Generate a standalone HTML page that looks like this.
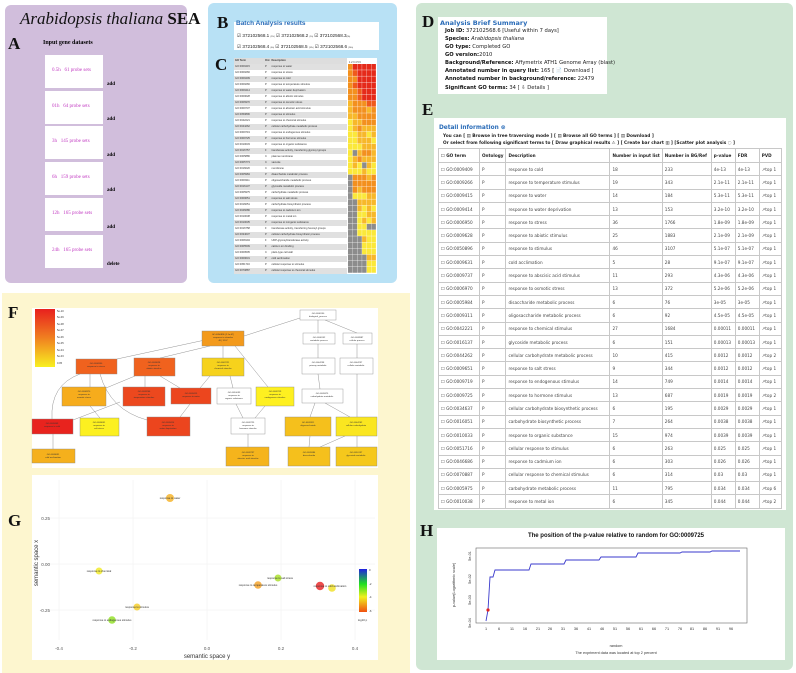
<!DOCTYPE html>
<html><head><meta charset="utf-8">
<style>
*{margin:0;padding:0;box-sizing:border-box}
body{width:796px;height:673px;background:#fff;position:relative;overflow:hidden;font-family:"Liberation Sans",sans-serif}
.abs{position:absolute}
.L{position:absolute;font-family:"Liberation Serif",serif;font-weight:bold;font-size:17px;color:#111}
.pa{background:#d1bedc;border-radius:6px}
.wb{position:absolute;left:45px;width:58px;height:33px;background:#fff;color:#c23cc2;font-family:"Liberation Serif",serif;font-size:5px;padding:13px 0 0 7px}
.add{position:absolute;left:107px;font-family:"Liberation Serif",serif;font-size:5px;font-weight:bold}
table{border-collapse:collapse}
#tc{position:absolute;left:234px;top:58px;width:113px;font-size:2.6px;color:#333}
#tc td{height:6px;line-height:6px;padding:0 1px;white-space:nowrap;overflow:hidden}
#tc tr:nth-child(even){background:#e0e0e0}
#te{position:absolute;left:438px;top:148px;width:344px;font-size:4.2px;color:#444;font-family:"DejaVu Sans",sans-serif;background:#fff}
#te td,#te th{border:1px solid #c8c8c8;height:13.3px;padding:0 2px;text-align:left;white-space:nowrap}
#te th{font-weight:bold;color:#222;height:14px}
.d{font-size:5.2px;color:#222;font-family:"DejaVu Sans",sans-serif;position:absolute;left:445px;white-space:nowrap}
.d b{color:#111}
</style></head><body>

<!-- A panel -->
<div class="abs pa" style="left:5px;top:5px;width:182px;height:278px"></div>
<div class="abs" style="left:20px;top:9px;font-family:'Liberation Serif',serif;font-size:17px;color:#111"><i>Arabidopsis thaliana</i> <b>SEA</b></div>
<div class="L" style="left:8px;top:34px">A</div>
<div class="abs" style="left:43px;top:40px;font-family:'Liberation Serif',serif;font-weight:bold;font-size:6px">Input gene datasets</div>
<div class="wb" style="top:55px">0.5h &nbsp; 61 probe sets</div><div class="add" style="top:82px">add</div>
<div class="wb" style="top:91px">01h &nbsp; 64 probe sets</div><div class="add" style="top:117px">add</div>
<div class="wb" style="top:126px">3h &nbsp; 145 probe sets</div><div class="add" style="top:153px">add</div>
<div class="wb" style="top:162px">6h &nbsp; 159 probe sets</div><div class="add" style="top:188px">add</div>
<div class="wb" style="top:198px">12h &nbsp; 165 probe sets</div><div class="add" style="top:225px">add</div>
<div class="wb" style="top:235px">24h &nbsp; 165 probe sets</div><div class="add" style="top:262px">delete</div>

<!-- B/C panel -->
<div class="abs" style="left:208px;top:3px;width:189px;height:280px;background:#b8e1f5;border-radius:6px"></div>
<div class="L" style="left:217px;top:13px">B</div>
<div class="L" style="left:215px;top:55px">C</div>
<div class="abs" style="left:234px;top:22px;width:145px;height:28px;background:#fff"></div>
<div class="abs" style="left:236px;top:20px;font-size:6.5px;font-weight:bold;color:#2a6cb8">Batch Analysis results</div>
<div class="abs" style="left:237px;top:31px;font-size:4.6px;color:#222;line-height:10px;white-space:nowrap">☑ 372102568.1 <span style="font-size:2px">(5%)</span> ☑ 372102568.2 <span style="font-size:2px">(1h)</span> ☑ 372102568.3<span style="font-size:2px">(3h)</span><br>☑ 372102568.4 <span style="font-size:2px">(6h)</span> ☑ 372102568.5 <span style="font-size:2px">(12h)</span> ☑ 372102568.6 <span style="font-size:2px">(24h)</span></div>
<div class="abs" style="left:234px;top:58px;width:143px;height:216px;background:#fff"></div>
<table id="tc">
<tr style="background:#ddd;font-weight:bold"><td style="width:30px">GO Term</td><td style="width:6px">Ont</td><td>Description</td></tr>
<tr><td>GO:0009415</td><td>P</td><td>response to water</td></tr>
<tr><td>GO:0009266</td><td>P</td><td>response to stress</td></tr>
<tr><td>GO:0009409</td><td>P</td><td>response to cold</td></tr>
<tr><td>GO:0009266</td><td>P</td><td>response to temperature stimulus</td></tr>
<tr><td>GO:0009414</td><td>P</td><td>response to water deprivation</td></tr>
<tr><td>GO:0009628</td><td>P</td><td>response to abiotic stimulus</td></tr>
<tr><td>GO:0006970</td><td>P</td><td>response to osmotic stress</td></tr>
<tr><td>GO:0009737</td><td>P</td><td>response to abscisic acid stimulus</td></tr>
<tr><td>GO:0050896</td><td>P</td><td>response to stimulus</td></tr>
<tr><td>GO:0042221</td><td>P</td><td>response to chemical stimulus</td></tr>
<tr><td>GO:0044262</td><td>P</td><td>cellular carbohydrate metabolic process</td></tr>
<tr><td>GO:0009719</td><td>P</td><td>response to endogenous stimulus</td></tr>
<tr><td>GO:0009725</td><td>P</td><td>response to hormone stimulus</td></tr>
<tr><td>GO:0010033</td><td>P</td><td>response to organic substance</td></tr>
<tr><td>GO:0016757</td><td>F</td><td>transferase activity, transferring glycosyl groups</td></tr>
<tr><td>GO:0005886</td><td>C</td><td>plasma membrane</td></tr>
<tr><td>GO:0005773</td><td>C</td><td>vacuole</td></tr>
<tr><td>GO:0016020</td><td>C</td><td>membrane</td></tr>
<tr><td>GO:0005984</td><td>P</td><td>disaccharide metabolic process</td></tr>
<tr><td>GO:0009311</td><td>P</td><td>oligosaccharide metabolic process</td></tr>
<tr><td>GO:0016137</td><td>P</td><td>glycoside metabolic process</td></tr>
<tr><td>GO:0005975</td><td>P</td><td>carbohydrate metabolic process</td></tr>
<tr><td>GO:0009651</td><td>P</td><td>response to salt stress</td></tr>
<tr><td>GO:0016051</td><td>P</td><td>carbohydrate biosynthetic process</td></tr>
<tr><td>GO:0046686</td><td>P</td><td>response to cadmium ion</td></tr>
<tr><td>GO:0010038</td><td>P</td><td>response to metal ion</td></tr>
<tr><td>GO:0010035</td><td>P</td><td>response to inorganic substance</td></tr>
<tr><td>GO:0016758</td><td>F</td><td>transferase activity, transferring hexosyl groups</td></tr>
<tr><td>GO:0034637</td><td>P</td><td>cellular carbohydrate biosynthetic process</td></tr>
<tr><td>GO:0008194</td><td>F</td><td>UDP-glycosyltransferase activity</td></tr>
<tr><td>GO:0005509</td><td>F</td><td>calcium ion binding</td></tr>
<tr><td>GO:0009505</td><td>C</td><td>plant-type cell wall</td></tr>
<tr><td>GO:0009631</td><td>P</td><td>cold acclimation</td></tr>
<tr><td>GO:0051716</td><td>P</td><td>cellular response to stimulus</td></tr>
<tr><td>GO:0070887</td><td>P</td><td>cellular response to chemical stimulus</td></tr>
</table>
<svg class="abs" style="left:348px;top:58px" width="30" height="216" id="hm">
<g font-size="2.5" fill="#333"><text x="1" y="5">1 2 3 4 5 6</text></g>
</svg>

<!-- D/E/H green panel -->
<div class="abs" style="left:416px;top:3px;width:377px;height:667px;background:#cfe6d3;border-radius:6px"></div>
<div class="L" style="left:422px;top:12px">D</div>
<div class="L" style="left:422px;top:100px">E</div>
<div class="L" style="left:420px;top:521px">H</div>
<div class="abs" style="left:438px;top:17px;width:169px;height:77px;background:#fff"></div>
<div class="abs" style="left:440px;top:19px;font-size:6.5px;font-weight:bold;color:#2a6cb8;font-family:'DejaVu Sans',sans-serif">Analysis Brief Summary</div>
<div class="d" style="top:28px"><b>Job ID:</b> 372102568.6 [Useful within 7 days]</div>
<div class="d" style="top:36px"><b>Species:</b> <i>Arabidopsis thaliana</i></div>
<div class="d" style="top:44px"><b>GO type:</b> Completed GO</div>
<div class="d" style="top:52px"><b>GO version:</b>2010</div>
<div class="d" style="top:60px"><b>Background/Reference:</b> Affymetrix ATH1 Genome Array (blast)</div>
<div class="d" style="top:68px"><b>Annotated number in query list:</b> 165 [ 📄 Download ]</div>
<div class="d" style="top:76px"><b>Annotated number in background/reference:</b> 22479</div>
<div class="d" style="top:85px"><b>Significant GO terms:</b> 34 [ ⇩ Details ]</div>

<div class="abs" style="left:434px;top:118px;width:352px;height:392px;background:#fff"></div>
<div class="abs" style="left:439px;top:125px;font-size:5.8px;font-weight:bold;color:#2a6cb8;font-family:'DejaVu Sans',sans-serif">Detail information ⊗</div>
<div class="abs" style="left:443px;top:134px;font-size:4.3px;font-weight:bold;color:#222;font-family:'DejaVu Sans',sans-serif;white-space:nowrap">You can [ ▤ Browse in tree traversing mode ] [ ▤ Browse all GO terms ] [ ▤ Download ]</div>
<div class="abs" style="left:443px;top:141px;font-size:4.3px;font-weight:bold;color:#222;font-family:'DejaVu Sans',sans-serif;white-space:nowrap">Or select from following significant terms to [ Draw graphical results ⚠ ] [ Create bar chart ▥ ] [Scatter plot analysis ◌ ]</div>
<table id="te">
<tr><th style="width:41px">☐ GO term</th><th style="width:26px">Ontology</th><th style="width:104px">Description</th><th style="width:52px">Number in input list</th><th style="width:49px">Number in BG/Ref</th><th style="width:24px">p-value</th><th style="width:24px">FDR</th><th>PVD</th></tr>
<tr><td>☐ GO:0009409</td><td>P</td><td>response to cold</td><td>18</td><td>233</td><td>4e-13</td><td>4e-13</td><td>↗top 1</td></tr>
<tr><td>☐ GO:0009266</td><td>P</td><td>response to temperature stimulus</td><td>19</td><td>343</td><td>2.1e-11</td><td>2.1e-11</td><td>↗top 1</td></tr>
<tr><td>☐ GO:0009415</td><td>P</td><td>response to water</td><td>14</td><td>184</td><td>5.3e-11</td><td>5.3e-11</td><td>↗top 1</td></tr>
<tr><td>☐ GO:0009414</td><td>P</td><td>response to water deprivation</td><td>13</td><td>153</td><td>3.2e-10</td><td>3.2e-10</td><td>↗top 1</td></tr>
<tr><td>☐ GO:0006950</td><td>P</td><td>response to stress</td><td>36</td><td>1766</td><td>1.8e-09</td><td>1.8e-09</td><td>↗top 1</td></tr>
<tr><td>☐ GO:0009628</td><td>P</td><td>response to abiotic stimulus</td><td>25</td><td>1883</td><td>2.1e-09</td><td>2.1e-09</td><td>↗top 1</td></tr>
<tr><td>☐ GO:0050896</td><td>P</td><td>response to stimulus</td><td>46</td><td>3107</td><td>5.1e-07</td><td>5.1e-07</td><td>↗top 1</td></tr>
<tr><td>☐ GO:0009631</td><td>P</td><td>cold acclimation</td><td>5</td><td>28</td><td>9.1e-07</td><td>9.1e-07</td><td>↗top 1</td></tr>
<tr><td>☐ GO:0009737</td><td>P</td><td>response to abscisic acid stimulus</td><td>11</td><td>293</td><td>4.3e-06</td><td>4.3e-06</td><td>↗top 1</td></tr>
<tr><td>☐ GO:0006970</td><td>P</td><td>response to osmotic stress</td><td>13</td><td>372</td><td>5.2e-06</td><td>5.2e-06</td><td>↗top 1</td></tr>
<tr><td>☐ GO:0005984</td><td>P</td><td>disaccharide metabolic process</td><td>6</td><td>76</td><td>3e-05</td><td>3e-05</td><td>↗top 1</td></tr>
<tr><td>☐ GO:0009311</td><td>P</td><td>oligosaccharide metabolic process</td><td>6</td><td>92</td><td>4.5e-05</td><td>4.5e-05</td><td>↗top 1</td></tr>
<tr><td>☐ GO:0042221</td><td>P</td><td>response to chemical stimulus</td><td>27</td><td>1684</td><td>0.00011</td><td>0.00011</td><td>↗top 1</td></tr>
<tr><td>☐ GO:0016137</td><td>P</td><td>glycoside metabolic process</td><td>6</td><td>151</td><td>0.00013</td><td>0.00013</td><td>↗top 1</td></tr>
<tr><td>☐ GO:0044262</td><td>P</td><td>cellular carbohydrate metabolic process</td><td>10</td><td>415</td><td>0.0012</td><td>0.0012</td><td>↗top 2</td></tr>
<tr><td>☐ GO:0009651</td><td>P</td><td>response to salt stress</td><td>9</td><td>344</td><td>0.0012</td><td>0.0012</td><td>↗top 1</td></tr>
<tr><td>☐ GO:0009719</td><td>P</td><td>response to endogenous stimulus</td><td>14</td><td>749</td><td>0.0014</td><td>0.0014</td><td>↗top 1</td></tr>
<tr><td>☐ GO:0009725</td><td>P</td><td>response to hormone stimulus</td><td>13</td><td>687</td><td>0.0019</td><td>0.0019</td><td>↗top 2</td></tr>
<tr><td>☐ GO:0034637</td><td>P</td><td>cellular carbohydrate biosynthetic process</td><td>6</td><td>195</td><td>0.0029</td><td>0.0029</td><td>↗top 1</td></tr>
<tr><td>☐ GO:0016051</td><td>P</td><td>carbohydrate biosynthetic process</td><td>7</td><td>264</td><td>0.0038</td><td>0.0038</td><td>↗top 1</td></tr>
<tr><td>☐ GO:0010033</td><td>P</td><td>response to organic substance</td><td>15</td><td>974</td><td>0.0039</td><td>0.0039</td><td>↗top 1</td></tr>
<tr><td>☐ GO:0051716</td><td>P</td><td>cellular response to stimulus</td><td>6</td><td>263</td><td>0.025</td><td>0.025</td><td>↗top 1</td></tr>
<tr><td>☐ GO:0046686</td><td>P</td><td>response to cadmium ion</td><td>6</td><td>303</td><td>0.026</td><td>0.026</td><td>↗top 1</td></tr>
<tr><td>☐ GO:0070887</td><td>P</td><td>cellular response to chemical stimulus</td><td>6</td><td>314</td><td>0.03</td><td>0.03</td><td>↗top 1</td></tr>
<tr><td>☐ GO:0005975</td><td>P</td><td>carbohydrate metabolic process</td><td>11</td><td>795</td><td>0.034</td><td>0.034</td><td>↗top 6</td></tr>
<tr><td>☐ GO:0010038</td><td>P</td><td>response to metal ion</td><td>6</td><td>345</td><td>0.044</td><td>0.044</td><td>↗top 2</td></tr>
</table>

<!-- H chart -->
<svg class="abs" style="left:0;top:0" width="796" height="673" font-family="Liberation Sans, sans-serif">
<rect x="437" y="528" width="348" height="132" fill="#fff"/>
<text x="616" y="537" font-size="6" font-weight="bold" text-anchor="middle" fill="#111">The position of the p-value relative to random for GO:0009725</text>
<rect x="476" y="548" width="271" height="75" fill="none" stroke="#666" stroke-width="0.6"/>
<polyline fill="none" stroke="#3a3acc" stroke-width="0.9" points="486,621 488,610 490,577 493,577 495,570 529,570 531,564 564,564 566,560 599,560 601,557 636,557 638,553 680,553 682,552 710,552 712,551 740,551"/>
<circle cx="488" cy="610" r="1.6" fill="#e02020"/>
<g font-size="3.8" fill="#333" text-anchor="middle">
<text x="486" y="630">1</text><text x="499" y="630">6</text><text x="512" y="630">11</text><text x="525" y="630">16</text><text x="538" y="630">21</text><text x="550" y="630">26</text><text x="563" y="630">31</text><text x="576" y="630">36</text><text x="589" y="630">41</text><text x="602" y="630">46</text><text x="615" y="630">51</text><text x="628" y="630">56</text><text x="641" y="630">61</text><text x="654" y="630">66</text><text x="667" y="630">71</text><text x="680" y="630">76</text><text x="692" y="630">81</text><text x="705" y="630">86</text><text x="718" y="630">91</text><text x="731" y="630">96</text>
<text x="616" y="647">random</text><text x="616" y="654">The expriment data was located at top 2 percent</text>
</g>
<g font-size="3.8" fill="#333" text-anchor="middle">
<text transform="translate(471,556) rotate(-90)">5e-01</text><text transform="translate(471,579) rotate(-90)">5e-02</text><text transform="translate(471,600) rotate(-90)">5e-03</text><text transform="translate(471,623) rotate(-90)">5e-04</text>
<text transform="translate(455,585) rotate(-90)">p-value(Logarithmic scale)</text>
</g>
</svg>

<!-- F/G yellow panel -->
<div class="abs" style="left:2px;top:293px;width:408px;height:380px;background:#fdf6cf"></div>
<div class="L" style="left:8px;top:303px">F</div>
<div class="L" style="left:8px;top:511px">G</div>
<svg class="abs" style="left:0;top:0" width="796" height="673" font-family="Liberation Sans, sans-serif">
<rect x="32" y="308" width="346" height="160" fill="#fff"/>
<defs><linearGradient id="lg" x1="0" y1="0" x2="0" y2="1"><stop offset="0" stop-color="#e8201e"/><stop offset=".5" stop-color="#f08020"/><stop offset="1" stop-color="#f8f020"/></linearGradient></defs>
<rect x="35" y="309" width="20" height="58" fill="url(#lg)"/>
<g font-size="2.6" fill="#333"><text x="57" y="312">5e-10</text><text x="57" y="318">5e-09</text><text x="57" y="325">5e-08</text><text x="57" y="331">5e-07</text><text x="57" y="338">5e-06</text><text x="57" y="344">5e-05</text><text x="57" y="351">5e-04</text><text x="57" y="357">5e-03</text><text x="57" y="364">0.05</text></g>
<g stroke="#777" stroke-width="0.4" fill="none">
<path d="M300 318 L244 336"/><path d="M318 320 L318 333"/><path d="M325 320 L357 333"/>
<path d="M205 340 L117 359"/><path d="M210 346 L160 358"/><path d="M223 346 L223 358"/><path d="M235 346 L268 387"/>
<path d="M318 344 L318 358"/><path d="M357 344 L357 358"/><path d="M318 374 L320 389"/><path d="M357 374 L357 417"/>
<path d="M90 374 L90 387"/><path d="M100 374 Q110 410 147 420"/><path d="M80 374 Q50 385 52 419"/><path d="M145 376 L145 387"/><path d="M160 376 L180 388"/><path d="M135 376 L106 388"/>
<path d="M210 376 L200 388"/><path d="M230 376 L233 388"/><path d="M190 404 L180 417"/><path d="M120 402 L73 420"/><path d="M90 406 L100 418"/>
<path d="M235 402 L243 418"/><path d="M265 406 L255 418"/><path d="M248 434 L248 447"/><path d="M315 403 L310 417"/><path d="M325 403 L350 417"/>
<path d="M310 436 L309 447"/><path d="M345 436 L320 447"/><path d="M357 436 L357 447"/><path d="M53 434 L53 449"/>
</g>
<g stroke="#888" stroke-width="0.4" font-size="2.5" text-anchor="middle" fill="#333">
<rect x="300" y="310" width="36" height="10" fill="#fff"/>
<rect x="202" y="331" width="42" height="15" fill="#f39a1c"/>
<rect x="303" y="333" width="32" height="11" fill="#fff"/><rect x="343" y="333" width="29" height="11" fill="#fff"/>
<rect x="76" y="359" width="41" height="15" fill="#f0621e"/><rect x="134" y="358" width="41" height="18" fill="#f0621e"/><rect x="202" y="358" width="42" height="18" fill="#f6d21c"/>
<rect x="302" y="358" width="33" height="16" fill="#fff"/><rect x="340" y="358" width="33" height="16" fill="#fff"/>
<rect x="62" y="387" width="44" height="19" fill="#f6ac1c"/><rect x="123" y="387" width="42" height="19" fill="#ec481e"/><rect x="171" y="388" width="40" height="16" fill="#ec461e"/>
<rect x="217" y="388" width="34" height="16" fill="#fff"/><rect x="256" y="387" width="38" height="19" fill="#fef020"/><rect x="302" y="389" width="41" height="14" fill="#fff"/>
<rect x="32" y="419" width="41" height="15" fill="#e8231e"/><rect x="80" y="418" width="39" height="18" fill="#fcf020"/><rect x="147" y="417" width="43" height="19" fill="#ec451e"/>
<rect x="231" y="418" width="34" height="16" fill="#fff"/><rect x="285" y="417" width="46" height="19" fill="#f5c01c"/><rect x="336" y="417" width="41" height="19" fill="#fae620"/>
<rect x="32" y="449" width="43" height="14" fill="#f5b01c"/><rect x="226" y="447" width="43" height="19" fill="#f5b41c"/><rect x="288" y="447" width="42" height="19" fill="#f5c01c"/><rect x="336" y="447" width="41" height="19" fill="#f5c81c"/>
</g>
<g font-size="2.2" fill="#333" text-anchor="middle">
<text x="318" y="314">GO:0008150</text><text x="318" y="317">biological_process</text>
<text x="223" y="335">GO:0050896 (2.1e-07)</text><text x="223" y="338">response to stimulus</text><text x="223" y="341">46 | 3107</text>
<text x="319" y="338">GO:0008152</text><text x="319" y="341">metabolic process</text><text x="357" y="338">GO:0009987</text><text x="357" y="341">cellular process</text>
<text x="96" y="364">GO:0006950</text><text x="96" y="367">response to stress</text><text x="154" y="363">GO:0009628</text><text x="154" y="366">response to</text><text x="154" y="369">abiotic stimulus</text>
<text x="223" y="363">GO:0042221</text><text x="223" y="366">response to</text><text x="223" y="369">chemical stimulus</text>
<text x="318" y="363">GO:0044238</text><text x="318" y="366">primary metabolic</text><text x="356" y="363">GO:0044237</text><text x="356" y="366">cellular metabolic</text>
<text x="84" y="392">GO:0006970</text><text x="84" y="395">response to</text><text x="84" y="398">osmotic stress</text>
<text x="144" y="392">GO:0009266</text><text x="144" y="395">response to</text><text x="144" y="398">temperature stimulus</text>
<text x="191" y="394">GO:0009415</text><text x="191" y="397">response to water</text>
<text x="234" y="393">GO:0010033</text><text x="234" y="396">response to</text><text x="234" y="399">organic substance</text>
<text x="275" y="392">GO:0009719</text><text x="275" y="395">response to</text><text x="275" y="398">endogenous stimulus</text>
<text x="322" y="394">GO:0005975</text><text x="322" y="397">carbohydrate metabolic</text>
<text x="52" y="424">GO:0009409</text><text x="52" y="427">response to cold</text><text x="99" y="423">GO:0009651</text><text x="99" y="426">response to</text><text x="99" y="429">salt stress</text>
<text x="168" y="423">GO:0009414</text><text x="168" y="426">response to</text><text x="168" y="429">water deprivation</text>
<text x="248" y="423">GO:0009725</text><text x="248" y="426">response to</text><text x="248" y="429">hormone stimulus</text>
<text x="308" y="423">GO:0009311</text><text x="308" y="426">oligosaccharide</text><text x="356" y="423">GO:0044262</text><text x="356" y="426">cellular carbohydrate</text>
<text x="53" y="455">GO:0009631</text><text x="53" y="458">cold acclimation</text><text x="248" y="453">GO:0009737</text><text x="248" y="456">response to</text><text x="248" y="459">abscisic acid stimulus</text>
<text x="309" y="453">GO:0005984</text><text x="309" y="456">disaccharide</text><text x="356" y="453">GO:0016137</text><text x="356" y="456">glycoside metabolic</text>
</g>
<!-- G -->
<rect x="32" y="475" width="346" height="185" fill="#fff"/>
<g stroke="#eee" stroke-width="0.5"><path d="M59 480V640M133 480V640M207 480V640M281 480V640M355 480V640M50 518H375M50 564H375M50 610H375"/></g>
<g fill-opacity="0.8">
<circle cx="170" cy="498" r="4" fill="#f5b020"/><circle cx="99" cy="571" r="3.5" fill="#f0e820"/><circle cx="137" cy="607" r="3.5" fill="#f5cc20"/><circle cx="112" cy="620" r="3.8" fill="#90e020"/>
<circle cx="278" cy="578" r="3.5" fill="#a8e020"/><circle cx="258" cy="585" r="3.8" fill="#f5a020"/><circle cx="320" cy="586" r="4.2" fill="#e82020"/><circle cx="332" cy="588" r="3.8" fill="#f0e020"/>
</g>
<g font-size="2.6" fill="#333" text-anchor="middle">
<text x="170" y="499">response to water</text><text x="99" y="572">response to chemical</text><text x="137" y="608">response to stimulus</text><text x="112" y="621">response to endogenous stimulus</text>
<text x="280" y="579">response to salt stress</text><text x="258" y="586">response to temperature stimulus</text><text x="330" y="587">response to cold acclimation</text>
</g>
<g font-size="4.5" fill="#555" text-anchor="middle">
<text x="59" y="650">-0.4</text><text x="133" y="650">-0.2</text><text x="207" y="650">0.0</text><text x="281" y="650">0.2</text><text x="355" y="650">0.4</text>
<text x="50" y="520" text-anchor="end">0.25</text><text x="50" y="566" text-anchor="end">0.00</text><text x="50" y="612" text-anchor="end">-0.25</text>
<text x="207" y="658" font-size="6" fill="#333">semantic space y</text>
<text transform="translate(38,563) rotate(-90)" font-size="6" fill="#333">semantic space x</text>
</g>
<defs><linearGradient id="cb" x1="0" y1="0" x2="0" y2="1"><stop offset="0" stop-color="#2020e0"/><stop offset=".35" stop-color="#20e020"/><stop offset=".65" stop-color="#f0f020"/><stop offset="1" stop-color="#f05010"/></linearGradient></defs>
<rect x="359" y="569" width="8" height="43" fill="url(#cb)"/>
<g font-size="2.8" fill="#333"><text x="369" y="571">0</text><text x="369" y="585">-2</text><text x="369" y="598">-4</text><text x="369" y="612">-6</text><text x="358" y="621">log10 p</text></g>
</svg>

<script>
(function(){
var rows=["ORRRRR","OrRRRR","OORRRR","OrRRRR","OOrRRR","OOrRRR","oOOOrr","oOOOoO","ooOOOO","YooOOO","YoOooo","YYooYo","YYoooY","YYYooo","YGoOOo","YoOooo","YoYGoY","YYYoYY","GOOOoO","GOOOOO","GOoOOO","GYYYoo","GGoooo","GGoYoY","GGYYoo","GGYoYo","GGYYGG","GGYYYY","GGGoYY","GGGYYY","GGGYYY","GGGGoo","GGGGYY","GGGGYY"];
var c={R:"#e52a1a",r:"#ef5a1c",O:"#f3901e",o:"#f7b82a",Y:"#fbe83a",G:"#8c8c8c"};
var s=document.getElementById("hm"),h="";
for(var i=0;i<rows.length;i++)for(var j=0;j<6;j++)h+='<rect x="'+(j*4.7)+'" y="'+(6+i*6.15)+'" width="4.4" height="5.8" fill="'+c[rows[i][j]]+'"/>';
s.insertAdjacentHTML("beforeend",h);
})();
</script>
</body></html>
